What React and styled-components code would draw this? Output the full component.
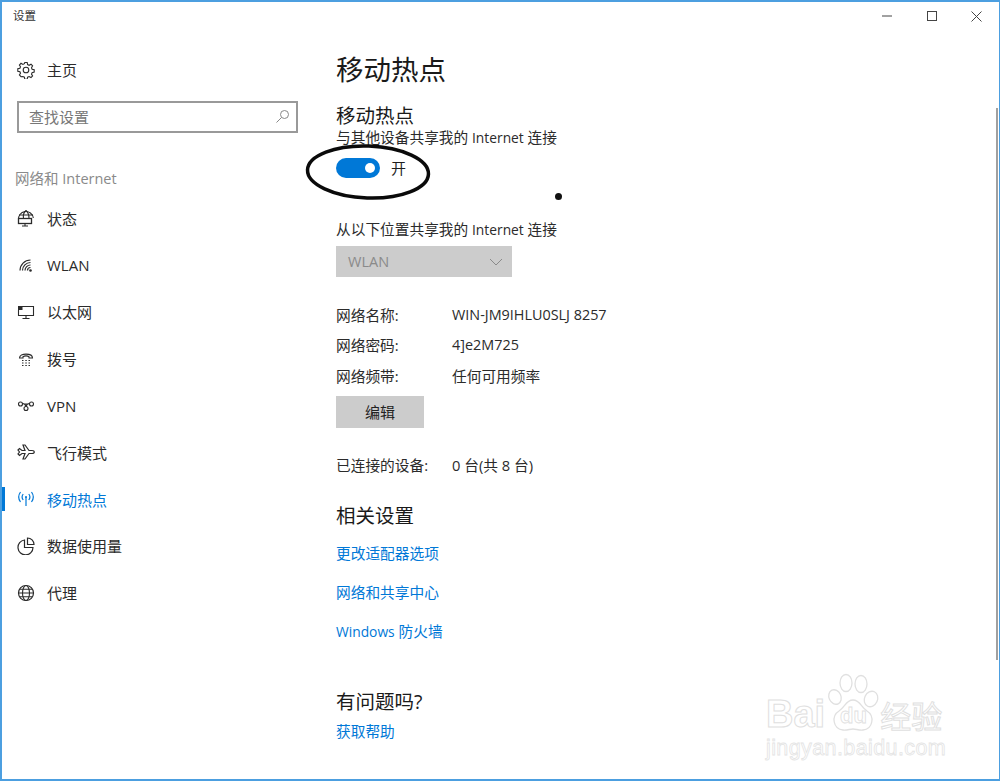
import React from 'react';
import styled, { createGlobalStyle } from 'styled-components';

const GlobalStyle = createGlobalStyle`
  html, body { margin: 0; padding: 0; background: #fff; }
  body { font-family: "Open Sans", "Noto Sans CJK SC", sans-serif; color: #1f1f1f; }
  * { box-sizing: border-box; }
`;

const Window = styled.div`
  position: relative;
  width: 1000px;
  height: 781px;
  border: 2px solid #4c9fe0;
  border-right-width: 1px;
  background: #fff;
  overflow: hidden;
`;

const TitleBar = styled.div`
  height: 28px;
  display: flex;
  align-items: center;
  justify-content: space-between;
`;

const TitleText = styled.div`
  font-size: 11.5px;
  padding: 0 0 2px 11px;
  color: #333;
`;

const WinButtons = styled.div`
  display: flex;
`;

const WinButton = styled.div`
  width: 45px;
  height: 28px;
  display: flex;
  align-items: center;
  justify-content: center;
  color: #444;
`;

const Body = styled.div`
  display: flex;
`;

const Sidebar = styled.nav`
  width: 334px;
  flex: none;
`;

const NavRow = styled.div`
  position: relative;
  height: 46.8px;
  display: flex;
  align-items: center;
  padding-left: 15px;
  font-size: 15px;
  color: ${p => (p.$active ? '#0078d7' : '#2b2b2b')};
  svg { flex: none; margin-right: 12px; }
  ${p => p.$active && `
    &::before {
      content: '';
      position: absolute;
      left: -2px;
      top: 11px;
      width: 5px;
      height: 24px;
      background: #0078d7;
    }
  `}
`;

const HomeRow = styled(NavRow)`
  margin-top: 16.5px;
`;

const SearchBox = styled.div`
  margin: 7.5px 0 0 15px;
  width: 281px;
  height: 32px;
  border: 2px solid #999;
  display: flex;
  align-items: center;
  justify-content: space-between;
  padding: 0 6px 0 10px;
  font-size: 15px;
  color: #777;
`;

const Category = styled.div`
  margin: 32px 0 2.2px 13px;
  height: 28px;
  line-height: 28px;
  font-size: 14.5px;
  color: #8a8a8a;
`;

const Main = styled.main`
  flex: 1;
`;

const PageTitle = styled.h1`
  margin: 18px 0 0;
  height: 44px;
  line-height: 44px;
  font-size: 27.5px;
  font-weight: 400;
  color: #1a1a1a;
`;

const SectionTitle = styled.h2`
  margin: ${p => p.$top || 0}px 0 0;
  height: ${p => p.$height || 28}px;
  line-height: ${p => p.$height || 28}px;
  font-size: 19.5px;
  font-weight: 400;
  color: #1a1a1a;
`;

const Text = styled.div`
  height: 22px;
  line-height: 22px;
  font-size: 14.7px;
  margin-top: ${p => p.$top || 0}px;
  color: #2b2b2b;
`;

const Latin = styled.span`
  font-size: ${p => p.$size || 13.8}px;
`;

const ToggleRow = styled.div`
  display: flex;
  align-items: center;
  gap: 11px;
  margin-top: 9px;
  font-size: 15px;
`;

const Track = styled.div`
  width: 44px;
  height: 20px;
  border-radius: 10px;
  background: #0078d7;
  display: flex;
  align-items: center;
  justify-content: flex-end;
  padding-right: 5px;
`;

const Knob = styled.div`
  width: 10px;
  height: 10px;
  border-radius: 50%;
  background: #fff;
`;

const Select = styled.div`
  width: 176px;
  height: 31px;
  margin-top: 6px;
  background: #cccccc;
  color: #8a8a8a;
  font-size: 14.5px;
  display: flex;
  align-items: center;
  justify-content: space-between;
  padding: 0 9px 0 12px;
`;

const InfoGrid = styled.div`
  display: grid;
  grid-template-columns: 116px auto;
  grid-auto-rows: 30.5px;
  align-items: center;
  margin-top: 22px;
  font-size: 14.7px;
  color: #2b2b2b;
`;

const EditButton = styled.div`
  width: 88px;
  height: 32px;
  margin-top: 5px;
  background: #cccccc;
  font-size: 15px;
  display: flex;
  align-items: center;
  justify-content: center;
  color: #222;
`;

const LinkText = styled.a`
  display: block;
  height: 22px;
  line-height: 22px;
  font-size: 14.7px;
  margin-top: ${p => p.$top || 0}px;
  color: #0078d7;
`;

const Ring = styled.svg`
  position: absolute;
  left: 302px;
  top: 139px;
`;

const Dot = styled.div`
  position: absolute;
  left: 553px;
  top: 191px;
  width: 7px;
  height: 7px;
  border-radius: 50%;
  background: #111;
`;

const ScrollThumb = styled.div`
  position: absolute;
  right: 1px;
  top: 106px;
  width: 2px;
  height: 552px;
  background: #a0a0a0;
`;

const Watermark = styled.div`
  position: absolute;
  left: 764px;
  top: 671px;
  width: 190px;
  color: transparent;
  font-family: "Liberation Sans", sans-serif;
  -webkit-text-stroke: 1px #e0e0e0;
`;

const MarkTop = styled.div`
  display: flex;
  align-items: flex-end;
  height: 60px;
  font-size: 38px;
  line-height: 38px;
  font-weight: 700;
  svg { margin-left: 1px; flex: none; }
`;

const MarkCjk = styled.span`
  font-family: "Noto Sans CJK SC", sans-serif;
  font-size: 31px;
  font-weight: 400;
  line-height: 36px;
  white-space: nowrap;
`;

const MarkUrl = styled.div`
  margin-top: 3px;
  font-size: 21.5px;
  font-weight: 400;
  line-height: 24px;
  letter-spacing: 0.4px;
  white-space: nowrap;
  -webkit-text-stroke: 0.8px #e4e4e4;
`;

const Icon = ({ children, size = 18 }) => (
  <svg width={size} height={size} viewBox="0 0 18 18" fill="none" stroke="currentColor" strokeWidth="1.1">
    {children}
  </svg>
);

const icons = {
  home: (
    <>
      <circle cx="9" cy="9" r="2.8" />
      <path d="M7.8 1.5h2.4l.4 2.1 1.5.7 1.9-1.1 1.6 1.7-1.1 1.8.6 1.5 2.1.5v2.4l-2.1.5-.6 1.5 1.1 1.8-1.6 1.7-1.9-1.1-1.5.7-.4 2.1H7.8l-.4-2.1-1.5-.7L4 15.7l-1.6-1.7 1.1-1.8-.6-1.5-2.1-.5V7.8l2.1-.5.6-1.500L2.4 4 4 2.3l1.9 1.1 1.5-.7z" />
    </>
  ),
  status: (
    <>
      <path d="M1.500 11A7.300 7.300 0 1 1 16.300 9" />
      <path d="M9 1.500C6.500 3.500 6 7 6.500 10M9 1.500c2.500 2 3 5 3 8M2 6h14" />
      <rect x="1.500" y="9.500" width="13" height="5" fill="#fff" strokeWidth="1.300" />
      <path d="M8 14.500v2.500M5 17h6" />
    </>
  ),
  wlan: (
    <>
      <circle cx="13.500" cy="14.500" r="1.300" fill="currentColor" stroke="none" />
      <path d="M10.500 14.500a3 3 0 0 1 3-3M8 14.500a5.500 5.500 0 0 1 5.500-5.500M5.500 14.500a8 8 0 0 1 8-8M3 14.500A10.500 10.500 0 0 1 13.500 4" strokeWidth="1.200" />
    </>
  ),
  ethernet: (
    <>
      <path d="M5 3.500h11.500v9h-15V7" />
      <rect x="1" y="3" width="4.500" height="4" fill="currentColor" stroke="none" />
      <path d="M9 12.500v3M5.500 15.500h7" />
    </>
  ),
  dialup: (
    <>
      <path d="M2.500 8C2.500 2.800 15.500 2.800 15.500 8h-3.500V6.800C10.500 5.600 7.500 5.600 6 6.800V8z" />
      <path d="M5 10.500h1.500M8.300 10.500h1.500M11.500 10.500H13M5 13h1.500M8.300 13h1.500M11.500 13H13M5 15.500h1.500M8.300 15.500h1.500M11.500 15.500H13" />
    </>
  ),
  vpn: (
    <>
      <circle cx="3.500" cy="7" r="2" />
      <circle cx="14.500" cy="7" r="2" />
      <circle cx="9" cy="11.500" r="2" />
      <path d="M5.500 6.500c2 0 3 1 3.500 3M12.500 6.500c-2 0-3 1-3.500 3M7.500 7h3" />
    </>
  ),
  plane: (
    <path d="M1 7l1.500-1.500 2.500 2h3L6 2h2l4 5.500h3c3 0 3 3 0 3h-3L8 16H6l2-5.500H5l-2.500 2L1 11l1.500-2z" strokeWidth="1.200" />
  ),
  hotspot: (
    <>
      <circle cx="9" cy="7" r="1" fill="currentColor" stroke="none" />
      <path d="M9 7v9M6.200 4a5 5 0 0 0 0 6M11.800 4a5 5 0 0 1 0 6M3.500 2a8.500 8.500 0 0 0 0 10M14.500 2a8.500 8.500 0 0 1 0 10" strokeWidth="1.200" />
    </>
  ),
  data: (
    <>
      <path d="M7.500 3A7.500 7.500 0 1 0 16 10.500H7.500z" strokeWidth="1.200" />
      <path d="M10.500 1v6.500H17A6.500 6.500 0 0 0 10.500 1z" strokeWidth="1.200" />
    </>
  ),
  proxy: (
    <>
      <circle cx="9" cy="9" r="7.500" strokeWidth="1.200" />
      <ellipse cx="9" cy="9" rx="3.500" ry="7.500" />
      <path d="M1.500 9h15M2.500 5.200h13M2.500 12.800h13" />
    </>
  ),
};

const navItems = [
  ['status', '状态'],
  ['wlan', 'WLAN'],
  ['ethernet', '以太网'],
  ['dialup', '拨号'],
  ['vpn', 'VPN'],
  ['plane', '飞行模式'],
  ['hotspot', '移动热点', true],
  ['data', '数据使用量'],
  ['proxy', '代理'],
];

export default function App() {
  return (
    <>
      <GlobalStyle />
      <Window>
        <TitleBar>
          <TitleText>设置</TitleText>
          <WinButtons>
            <WinButton>
              <svg width="10" height="10" viewBox="0 0 10 10" stroke="currentColor"><path d="M0 5h10" /></svg>
            </WinButton>
            <WinButton>
              <svg width="10" height="10" viewBox="0 0 10 10" fill="none" stroke="currentColor"><rect x=".5" y=".5" width="9" height="9" /></svg>
            </WinButton>
            <WinButton>
              <svg width="11" height="11" viewBox="0 0 11 11" stroke="currentColor"><path d="M.5.5l10 10M10.500.5l-10 10" /></svg>
            </WinButton>
          </WinButtons>
        </TitleBar>
        <Body>
          <Sidebar>
            <HomeRow>
              <Icon>{icons.home}</Icon>主页
            </HomeRow>
            <SearchBox>
              查找设置
              <svg width="15" height="15" viewBox="0 0 15 15" fill="none" stroke="#888" strokeWidth="1">
                <circle cx="9.500" cy="5.500" r="4" />
                <path d="M6.500 8.500L1.500 13.500" />
              </svg>
            </SearchBox>
            <Category>网络和 Internet</Category>
            {navItems.map(([icon, label, active]) => (
              <NavRow key={label} $active={active}>
                <Icon>{icons[icon]}</Icon>
                {label}
              </NavRow>
            ))}
          </Sidebar>
          <Main>
            <PageTitle>移动热点</PageTitle>
            <SectionTitle $top={13} $height={21}>移动热点</SectionTitle>
            <Text>与其他设备共享我的 <Latin>Internet</Latin> 连接</Text>
            <ToggleRow>
              <Track><Knob /></Track>
              开
            </ToggleRow>
            <Text $top={40}>从以下位置共享我的 <Latin>Internet</Latin> 连接</Text>
            <Select>
              WLAN
              <svg width="14" height="8" viewBox="0 0 14 8" fill="none" stroke="#8a8a8a"><path d="M1 1l6 6 6-6" /></svg>
            </Select>
            <InfoGrid>
              <span>网络名称:</span><Latin $size={14.4}>WIN-JM9IHLU0SLJ 8257</Latin>
              <span>网络密码:</span><Latin $size={14.4}>4]e2M725</Latin>
              <span>网络频带:</span><span>任何可用频率</span>
            </InfoGrid>
            <EditButton>编辑</EditButton>
            <InfoGrid>
              <span>已连接的设备:</span><span>0 台(共 8 台)</span>
            </InfoGrid>
            <SectionTitle $top={22}>相关设置</SectionTitle>
            <LinkText $top={12}>更改适配器选项</LinkText>
            <LinkText $top={17}>网络和共享中心</LinkText>
            <LinkText $top={17}><Latin>Windows</Latin> 防火墙</LinkText>
            <SectionTitle $top={46}>有问题吗?</SectionTitle>
            <LinkText $top={4}>获取帮助</LinkText>
          </Main>
        </Body>
        <Ring width="128" height="62" viewBox="0 0 128 62" fill="none" stroke="#0a0a0a" strokeWidth="3.500">
          <ellipse cx="64" cy="31" rx="60.500" ry="26" transform="rotate(2 64 31)" />
        </Ring>
        <Dot />
        <ScrollThumb />
        <Watermark>
          <MarkTop>
            Bai
            <svg width="54" height="60" viewBox="0 0 54 60" fill="none" stroke="#e0e0e0" strokeWidth="1.300">
              <ellipse cx="9" cy="24" rx="6" ry="7.500" transform="rotate(-25 9 24)" />
              <ellipse cx="20" cy="10" rx="6" ry="8.500" />
              <ellipse cx="35" cy="11" rx="6" ry="8.500" />
              <ellipse cx="45" cy="26" rx="6.500" ry="8" transform="rotate(25 45 26)" />
              <path d="M27 27c7 0 8 7 14 11 8 5 6 18-4 19-4 .5-7-1-10-1s-6 1.500-10 1c-10-1-12-14-4-19 6-4 7-11 14-11z" />
              <text x="14" y="50" fontSize="22" fontFamily="Liberation Sans" strokeWidth="0.800">du</text>
            </svg>
            <MarkCjk>经验</MarkCjk>
          </MarkTop>
          <MarkUrl>jingyan.baidu.com</MarkUrl>
        </Watermark>
      </Window>
    </>
  );
}
